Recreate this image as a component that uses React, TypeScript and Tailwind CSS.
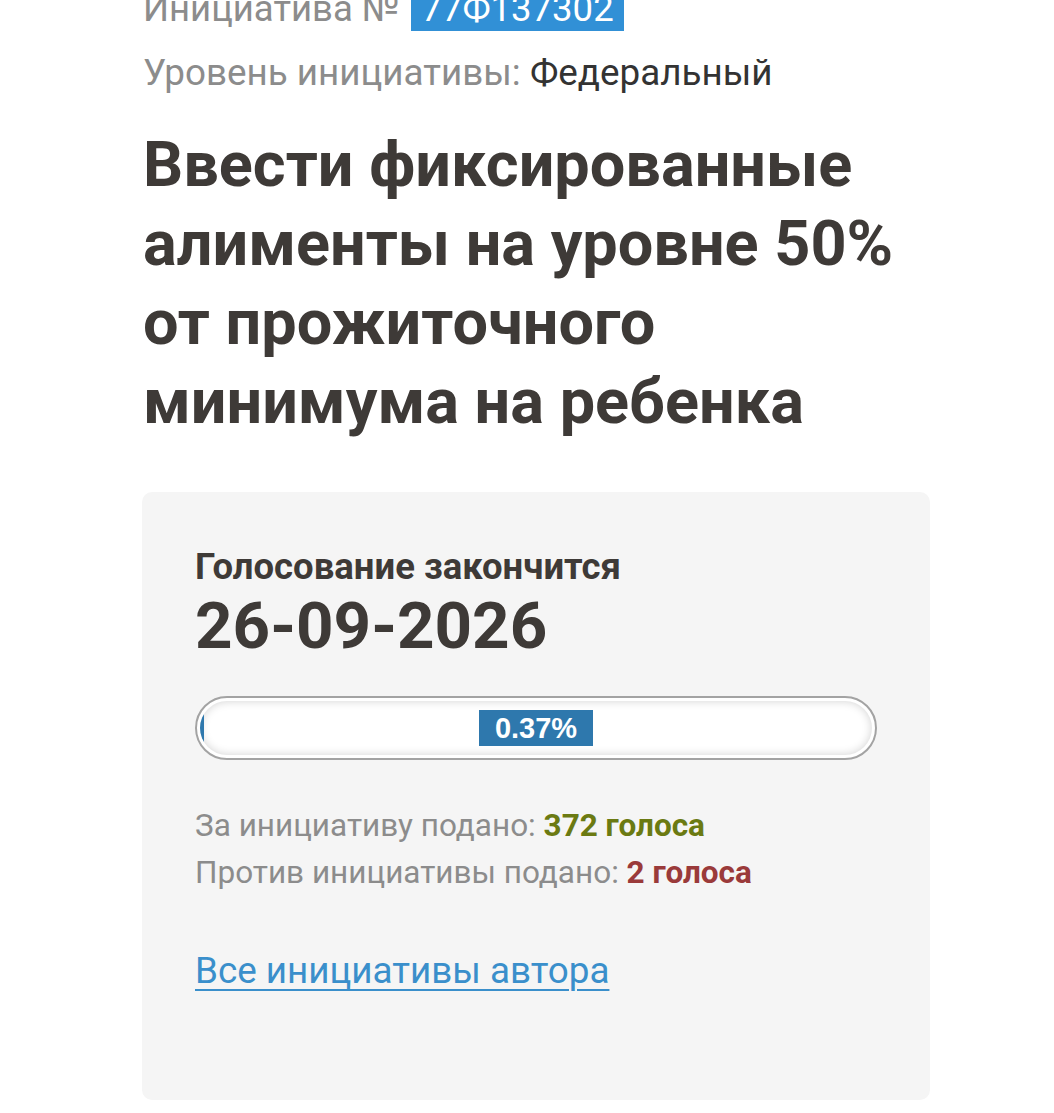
export default function App() {
  return (
    <div className="min-h-screen bg-white overflow-hidden" style={{ fontFamily: "Roboto, 'Noto Sans', sans-serif" }}>
      <div className="pl-[143px] pr-[123px]">
        {/* initiative number */}
        <div className="mt-[-13px] flex items-center gap-[12px] text-[36.5px] leading-[44px] text-[#8c8c8c]">
          <span>Инициатива №</span>
          <span className="bg-[#3190d6] px-[10px] text-white">77Ф137302</span>
        </div>
        <div className="mt-[20px] text-[36.8px] leading-[44px] text-[#8c8c8c]">
          Уровень инициативы: <span className="text-[#333333]">Федеральный</span>
        </div>

        <h1 className="mt-[30px] text-[63px] font-bold leading-[79px] text-[#3e3a37]">
          Ввести фиксированные алименты на уровне 50% от прожиточного минимума на ребенка
        </h1>

        {/* voting card */}
        <div className="mt-[51px] -ml-px w-[788px] h-[608px] rounded-[10px] bg-[#f5f5f5] px-[53px] pt-[53px]">
          <div className="text-[36.5px] font-bold leading-[44px] text-[#3e3a37]">Голосование закончится</div>
          <div className="mt-[2px] text-[65.5px] font-bold leading-[70px] text-[#3e3a37]">26-09-2026</div>

          <div className="mt-[35px] h-[64px] rounded-full border-2 border-[#a3a3a3] bg-white p-[3px]">
            <div className="relative flex h-full items-center justify-center overflow-hidden rounded-full bg-white shadow-[inset_0_0_10px_rgba(0,0,0,0.18)]">
              <div className="absolute left-0 top-0 h-full w-[4px] bg-[#2e78ad]" />
              <span
                className="bg-[#2e78ad] px-[16px] text-[29px] font-bold leading-[36px] text-white"
                style={{ fontFamily: "'Liberation Sans', Arial, sans-serif" }}
              >
                0.37%
              </span>
            </div>
          </div>

          <div className="mt-[42px] text-[31.5px] leading-[47px] text-[#8c8c8c]">
            <div>
              За инициативу подано: <span className="font-bold text-[#6b7a12]">372 голоса</span>
            </div>
            <div>
              Против инициативы подано: <span className="font-bold text-[#9a3a3a]">2 голоса</span>
            </div>
          </div>

          <a href="#" className="mt-[53px] inline-block text-[36.8px] leading-[44px] text-[#3a8fcb] underline decoration-2 underline-offset-[6px]">
            Все инициативы автора
          </a>
        </div>
      </div>
    </div>
  );
}
